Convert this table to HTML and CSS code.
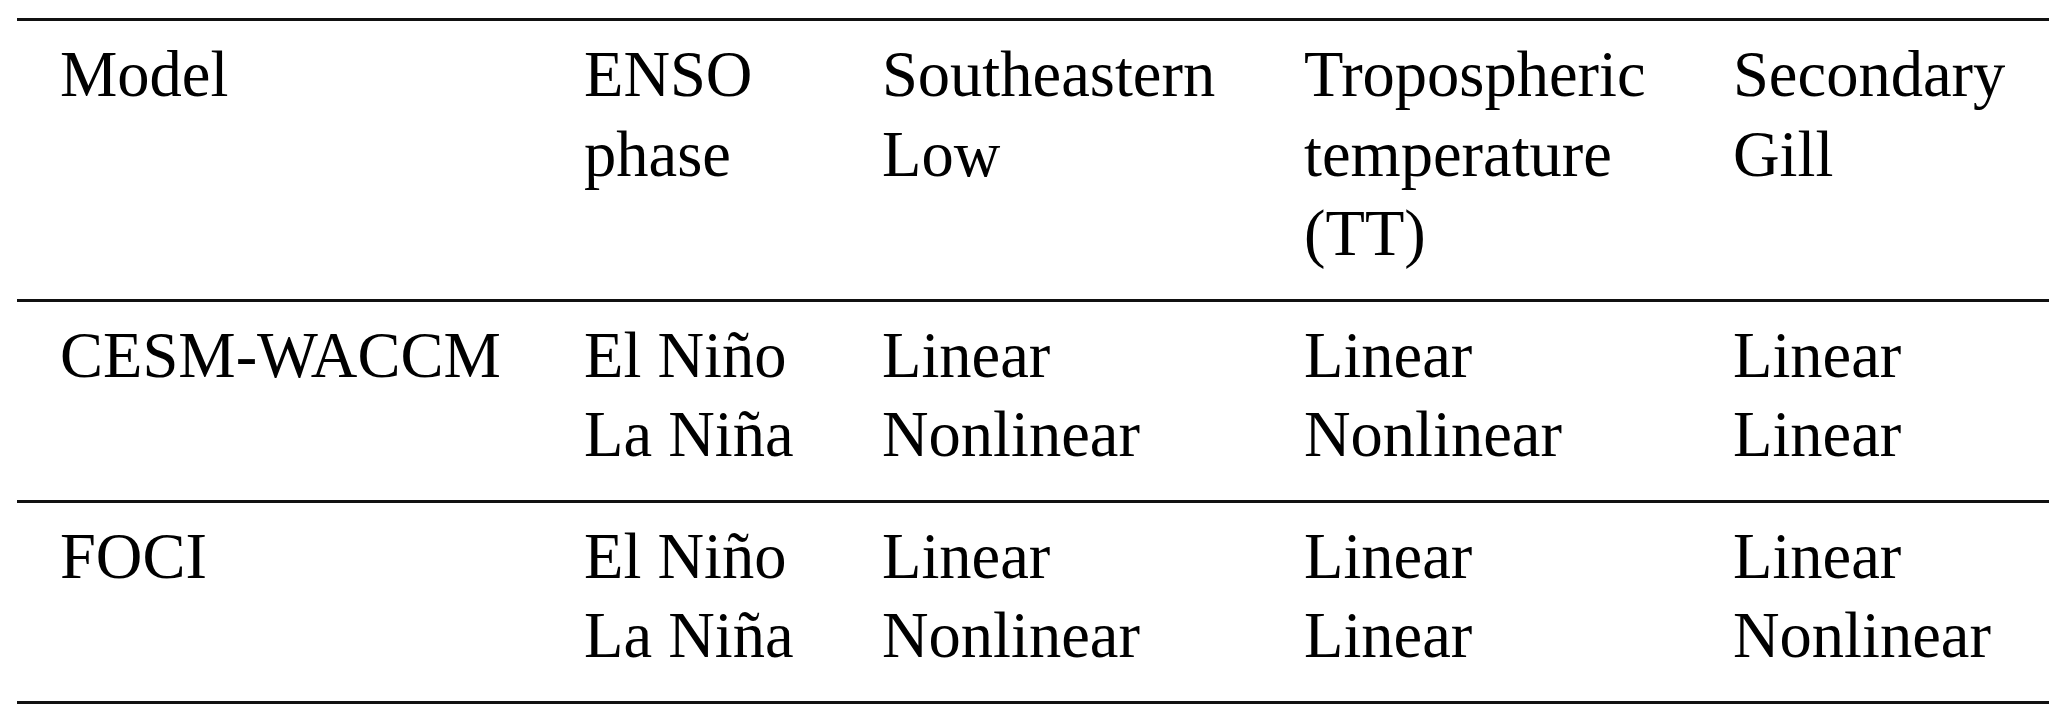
FILE: index.html
```html
<!DOCTYPE html>
<html lang="en">
<head>
    <meta charset="UTF-8">
    <meta name="viewport" content="width=device-width, initial-scale=1.0">
    <title>ENSO teleconnection linearity</title>
    <link rel="stylesheet" href="styles.css">
</head>
<body>
    <table class="result-table">
        <colgroup>
            <col class="col-model">
            <col class="col-phase">
            <col class="col-low">
            <col class="col-tt">
            <col class="col-gill">
        </colgroup>
        <thead>
            <tr>
                <th>Model</th>
                <th>ENSO<br>phase</th>
                <th>Southeastern<br>Low</th>
                <th>Tropospheric<br>temperature<br>(TT)</th>
                <th>Secondary<br>Gill</th>
            </tr>
        </thead>
        <tbody>
            <tr>
                <td>CESM-WACCM</td>
                <td>El Niño<br>La Niña</td>
                <td>Linear<br>Nonlinear</td>
                <td>Linear<br>Nonlinear</td>
                <td>Linear<br>Linear</td>
            </tr>
            <tr>
                <td>FOCI</td>
                <td>El Niño<br>La Niña</td>
                <td>Linear<br>Nonlinear</td>
                <td>Linear<br>Linear</td>
                <td>Linear<br>Nonlinear</td>
            </tr>
        </tbody>
    </table>
</body>
</html>
```

FILE: styles.css
```css
body {
    margin: 0;
    padding: 18px 0 0 17px;
    background: #fff;
    color: #000;
    font-family: "Liberation Serif", "Times New Roman", serif;
}
.result-table {
    width: 2032px;
    table-layout: fixed;
    border-collapse: collapse;
    font-size: 64.5px;
    line-height: 79.5px;
}
.col-model { width: 524px; }
.col-phase { width: 298px; }
.col-low { width: 422px; }
.col-tt { width: 429px; }
.col-gill { width: 359px; }
.result-table th,
.result-table td {
    text-align: left;
    vertical-align: top;
    font-weight: normal;
    padding: 14px 0 25px 43px;
    white-space: nowrap;
}
.result-table thead tr {
    border-top: 3px solid #111;
}
.result-table tr {
    border-bottom: 3px solid #111;
}
```
